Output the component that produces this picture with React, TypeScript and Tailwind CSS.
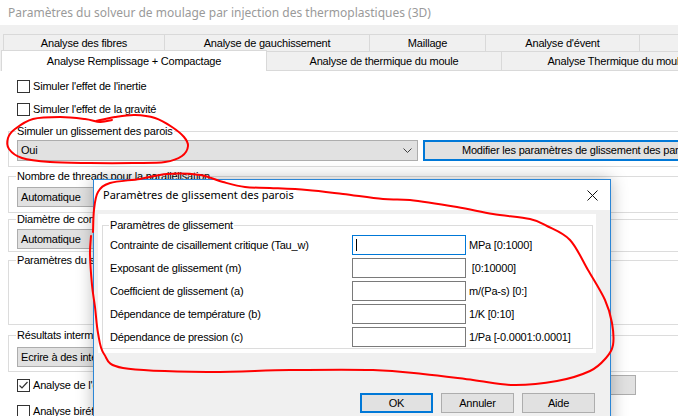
import React from "react"
import clsx from "clsx"

type Pt = [number, number]

// catmull-rom to cubic bezier, for the hand drawn marks
function smooth(pts: Pt[]) {
  let d = `M ${pts[0][0]} ${pts[0][1]}`
  for (let i = 0; i < pts.length - 1; i++) {
    const p0 = pts[i - 1] ?? pts[i]
    const p1 = pts[i]
    const p2 = pts[i + 1]
    const p3 = pts[i + 2] ?? p2
    const c1x = p1[0] + (p2[0] - p0[0]) / 6
    const c1y = p1[1] + (p2[1] - p0[1]) / 6
    const c2x = p2[0] - (p3[0] - p1[0]) / 6
    const c2y = p2[1] - (p3[1] - p1[1]) / 6
    d += ` C ${c1x.toFixed(1)} ${c1y.toFixed(1)} ${c2x.toFixed(1)} ${c2y.toFixed(1)} ${p2[0]} ${p2[1]}`
  }
  return d
}

const loopOne: Pt[] = [
  [96, 121], [115, 117], [135, 115], [155, 118], [172, 127], [184, 137], [188, 146],
  [182, 156], [165, 162], [133, 163], [90, 163], [50, 162], [22, 158], [9, 149],
  [8, 138], [15, 129], [33, 119], [60, 117], [85, 119], [100, 122], [112, 120],
]

const loopTwo: Pt[] = [
  [93, 232], [94, 210], [98, 192], [110, 183], [140, 179], [167, 174], [200, 175],
  [223, 182], [245, 187], [270, 188], [307, 190], [343, 194], [383, 199], [410, 200],
  [457, 207], [493, 214], [530, 219], [547, 226], [570, 240], [588, 270], [605, 300],
  [612, 323], [613, 345], [606, 358], [590, 371], [557, 381], [513, 385], [473, 380],
  [423, 374], [373, 370], [290, 370], [207, 372], [123, 368], [104, 354], [98, 333],
  [95, 307], [92, 285], [90, 255], [91, 236],
]

function CheckBox({ checked }: { checked?: boolean }) {
  return (
    <span className="w-[13px] h-[13px] border border-[#333333] bg-white flex items-center justify-center shrink-0">
      {checked && (
        <svg width="11" height="11" viewBox="0 0 11 11">
          <polyline points="1.5,5.5 4,8 9.5,2" fill="none" stroke="#333" strokeWidth="1.2" />
        </svg>
      )}
    </span>
  )
}

function Chevron() {
  return (
    <svg width="9" height="5" viewBox="0 0 9 5" className="shrink-0">
      <polyline points="0.5,0.5 4.5,4.5 8.5,0.5" fill="none" stroke="#404040" strokeWidth="1" />
    </svg>
  )
}

function Combo({ text, className }: { text: string; className: string }) {
  return (
    <div
      className={clsx(
        "bg-[#e1e1e1] border border-[#adadad] flex items-center justify-between pl-[3px] pr-[5px] shrink-0",
        className
      )}
    >
      <span>{text}</span>
      <Chevron />
    </div>
  )
}

function Group({
  label,
  className,
  children,
}: {
  label: string
  className?: string
  children?: React.ReactNode
}) {
  return (
    <fieldset className={clsx("border border-[#dcdcdc] ml-[8px] w-[740px]", className)}>
      <legend className="ml-[7px] px-[1px] leading-[12px]">{label}</legend>
      {children}
    </fieldset>
  )
}

const topTabs = [
  { label: "Analyse des fibres", w: "w-[162px]" },
  { label: "Analyse de gauchissement", w: "w-[205px]" },
  { label: "Maillage", w: "w-[116px]" },
  { label: "Analyse d'évent", w: "w-[154px]" },
  { label: "Analyse de retassure", w: "w-[200px]" },
]

const rows = [
  { label: "Contrainte de cisaillement critique (Tau_w)", unit: "MPa [0:1000]", focus: true },
  { label: "Exposant de glissement (m)", unit: " [0:10000]" },
  { label: "Coefficient de glissement (a)", unit: "m/(Pa-s) [0:]" },
  { label: "Dépendance de température (b)", unit: "1/K [0:10]" },
  { label: "Dépendance de pression (c)", unit: "1/Pa [-0.0001:0.0001]" },
]

function SlipDialog() {
  return (
    <div className="absolute left-[93px] top-[179px] w-[518px] h-[260px] border border-[#2b86d6] bg-[#f0f0f0] shadow-[0_0_16px_rgba(0,0,0,0.28)] flex flex-col">
      <div className="h-[30px] bg-white flex items-center justify-between pl-[9px] pr-[12px] font-['Noto_Sans',sans-serif] text-[11px] tracking-normal text-black">
        <span>Paramètres de glissement des parois</span>
        <svg width="11" height="11" viewBox="0 0 11 11">
          <path d="M0.5 0.5 L10.5 10.5 M10.5 0.5 L0.5 10.5" stroke="#111" strokeWidth="1" fill="none" />
        </svg>
      </div>
      <div className="pt-[4px] pl-[4px] pr-[14px]">
        <div className="bg-white h-[139px] pt-[5px] pl-[4px] pr-[3px]">
          <fieldset className="border border-[#dcdcdc] pb-[1px]">
            <legend className="ml-[6px] px-[1px] leading-[12px]">Paramètres de glissement</legend>
            <div className="flex flex-col gap-[3px] mt-[4px] pl-[7px]">
              {rows.map((r) => (
                <div key={r.label} className="flex items-center h-[20px]">
                  <span className="w-[242px] shrink-0">{r.label}</span>
                  <div
                    className={clsx(
                      "w-[114px] h-[20px] shrink-0 bg-white border flex items-center pl-[3px]",
                      r.focus ? "border-[#0078d7]" : "border-[#7a7a7a]"
                    )}
                  >
                    {r.focus && <span className="w-px h-[12px] bg-black" />}
                  </div>
                  <span className="ml-[3px] whitespace-pre">{r.unit}</span>
                </div>
              ))}
            </div>
          </fieldset>
        </div>
      </div>
      <div className="flex justify-end gap-[8px] pr-[15px] mt-[40px]">
        <button className="w-[73px] h-[20px] bg-[#e1e1e1] border-2 border-[#0078d7] flex items-center justify-center">
          OK
        </button>
        <button className="w-[73px] h-[20px] bg-[#e1e1e1] border border-[#adadad] flex items-center justify-center">
          Annuler
        </button>
        <button className="w-[73px] h-[20px] bg-[#e1e1e1] border border-[#adadad] flex items-center justify-center">
          Aide
        </button>
      </div>
    </div>
  )
}

export default function App() {
  return (
    <div className="relative w-[678px] h-[416px] overflow-hidden bg-white text-black font-['Liberation_Sans',Arial,sans-serif] text-[11px] tracking-[-0.2px]">
      <div className="h-[25px] pl-[8px] flex items-center font-['Noto_Sans',sans-serif] text-[12px] tracking-normal text-[#9a9a9a]">
        Paramètres du solveur de moulage par injection des thermoplastiques (3D)
      </div>

      <div className="bg-[#f0f0f0] pt-[9px] w-[800px]">
        <div className="flex pl-[3px] h-[17px]">
          {topTabs.map((t, i) => (
            <div
              key={t.label}
              className={clsx(
                "border-t border-r border-[#d9d9d9] flex items-center justify-center shrink-0",
                i === 0 && "border-l",
                t.w
              )}
            >
              {t.label}
            </div>
          ))}
        </div>
        <div className="flex pl-[1px] h-[20px]">
          <div className="w-[266px] h-[21px] -mt-[1px] bg-white border-t border-l border-r border-[#d9d9d9] flex items-center justify-center shrink-0">
            Analyse Remplissage + Compactage
          </div>
          <div className="w-[235px] h-[20px] border-t border-r border-b border-[#d9d9d9] flex items-center justify-center shrink-0">
            Analyse de thermique du moule
          </div>
          <div className="w-[253px] h-[20px] border-t border-r border-b border-[#d9d9d9] flex items-center justify-center shrink-0">
            Analyse Thermique du moule (3D)
          </div>
        </div>
      </div>

      <div className="bg-white pt-[9px] w-[800px]">
        <div className="flex items-center gap-[3px] pl-[17px] h-[13px]">
          <CheckBox />
          <span>Simuler l'effet de l'inertie</span>
        </div>
        <div className="flex items-center gap-[3px] pl-[17px] h-[13px] mt-[10px]">
          <CheckBox />
          <span>Simuler l'effet de la gravité</span>
        </div>

        <Group label="Simuler un glissement des parois" className="mt-[9px]">
          <div className="flex gap-[5px] pl-[8px] mt-[3px] pb-[5px]">
            <Combo text="Oui" className="w-[401px] h-[21px]" />
            <button className="w-[308px] h-[21px] bg-[#e1e1e1] border-2 border-[#0078d7] flex items-center justify-center shrink-0">
              Modifier les paramètres de glissement des parois
            </button>
          </div>
        </Group>

        <Group label="Nombre de threads pour la parallélisation" className="mt-[3px]">
          <div className="pl-[8px] mt-[5px] pb-[5px]">
            <Combo text="Automatique" className="w-[580px] h-[20px]" />
          </div>
        </Group>

        <Group label="Diamètre de contact du moule" className="mt-0">
          <div className="pl-[8px] mt-[4px] pb-[2px]">
            <Combo text="Automatique" className="w-[580px] h-[20px]" />
          </div>
        </Group>

        <Group label="Paramètres du solveur" className="mt-[2px]">
          <div className="h-[58px]" />
        </Group>

        <Group label="Résultats intermédiaires" className="mt-[4px]">
          <div className="pl-[8px] mt-[6px] pb-[4px]">
            <Combo text="Ecrire à des intervalles constants" className="w-[580px] h-[20px]" />
          </div>
        </Group>

        <div className="flex items-center h-[20px] mt-[3px] pl-[17px]">
          <div className="w-[592px] flex items-center gap-[3px] shrink-0">
            <CheckBox checked />
            <span>Analyse de l'évent</span>
          </div>
          <div className="w-[27px] h-[20px] bg-[#e1e1e1] border border-[#adadad] shrink-0" />
        </div>
        <div className="flex items-center gap-[3px] pl-[17px] h-[13px] mt-[10px]">
          <CheckBox />
          <span>Analyse biréfringence</span>
        </div>
      </div>

      <SlipDialog />

      <svg className="absolute inset-0 pointer-events-none" width="678" height="416" viewBox="0 0 678 416">
        <path d={smooth(loopOne)} fill="none" stroke="#ff0000" strokeWidth="2" strokeLinecap="round" strokeLinejoin="round" />
        <path d={smooth(loopTwo)} fill="none" stroke="#ff0000" strokeWidth="2" strokeLinecap="round" strokeLinejoin="round" />
      </svg>
    </div>
  )
}
